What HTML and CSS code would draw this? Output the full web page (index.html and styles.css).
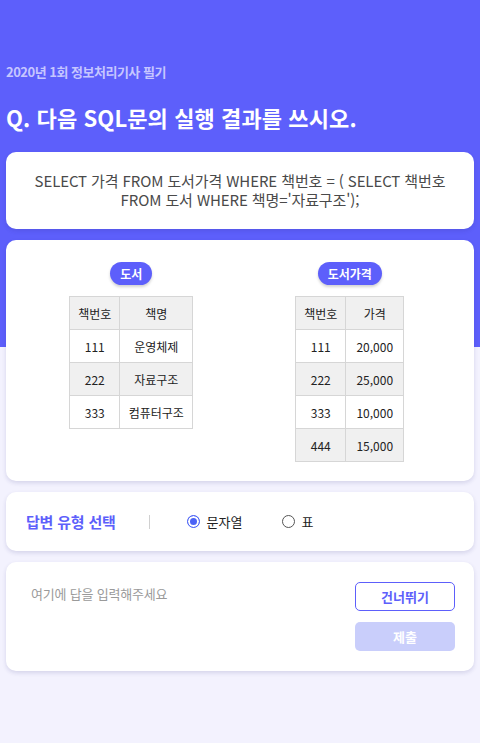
FILE: index.html
```html
<!DOCTYPE html>
<html lang="ko">
<head>
  <meta charset="UTF-8" />
  <meta name="viewport" content="width=device-width, initial-scale=1.0"/>
  <title>정보처리기사 필기</title>
  <link rel="stylesheet" href="styles.css">
</head>
<body>
  <header class="top">
    <p class="exam">2020년 1회 정보처리기사 필기</p>
    <h1>Q. 다음 SQL문의 실행 결과를 쓰시오.</h1>
  </header>

  <div class="card query">
    SELECT 가격 FROM 도서가격 WHERE 책번호 = ( SELECT 책번호 FROM 도서 WHERE 책명='자료구조');
  </div>

  <div class="card tables">
    <div class="tbl-box">
      <span class="pill">도서</span>
      <table class="t1">
        <tr><th>책번호</th><th>책명</th></tr>
        <tr><td>111</td><td>운영체제</td></tr>
        <tr><td>222</td><td>자료구조</td></tr>
        <tr><td>333</td><td>컴퓨터구조</td></tr>
      </table>
    </div>
    <div class="tbl-box">
      <span class="pill">도서가격</span>
      <table class="t2">
        <tr><th>책번호</th><th>가격</th></tr>
        <tr><td>111</td><td>20,000</td></tr>
        <tr><td>222</td><td>25,000</td></tr>
        <tr><td>333</td><td>10,000</td></tr>
        <tr><td>444</td><td>15,000</td></tr>
      </table>
    </div>
  </div>

  <div class="card type">
    <span class="type-title">답변 유형 선택</span>
    <span class="sep"></span>
    <label class="radio checked"><i></i>문자열</label>
    <label class="radio"><i></i>표</label>
  </div>

  <div class="card answer">
    <div class="placeholder">여기에 답을 입력해주세요</div>
    <div class="btns">
      <button class="btn skip">건너뛰기</button>
      <button class="btn submit">제출</button>
    </div>
  </div>
</body>
</html>
```

FILE: styles.css
```css
body { font-family: "Noto Sans CJK KR", "Noto Sans", sans-serif; margin: 0; padding: 0 0 72px; background: linear-gradient(#5d5ffb 347px, #f3f2fe 347px); color: #222; }
.top { padding: 63px 6px 0; color: #fff; }
.exam { margin: 0; font-size: 13px; font-weight: bold; color: #c6c6ff; line-height: 18px; letter-spacing: -0.5px; }
h1 { margin: 21px 0 0; font-size: 22px; line-height: 30px; font-weight: bold; letter-spacing: 0.1px; }
.card { background: #fff; border-radius: 10px; margin: 0 6px 11px; box-shadow: 0 2px 4px rgba(40,40,120,.15); }
.query { margin-top: 20px; padding: 19px 24px 20px; text-align: center; font-size: 15px; line-height: 19px; color: #4a4a4a; letter-spacing: -0.1px; }
.tables { display: grid; grid-template-columns: 1fr 1fr; padding: 22px 15px 19px 16px; align-items: start; }
.tbl-box { display: flex; flex-direction: column; align-items: center; }
.pill { background: #5d5ffb; color: #fff; font-size: 12px; font-weight: bold; line-height: 23px; padding: 0 10px; border-radius: 12px; box-shadow: 0 2px 3px rgba(0,0,0,.18); }
table { border-collapse: collapse; margin-top: 11px; font-size: 12px; color: #222; }
th, td { border: 1px solid #d6d6d6; height: 32px; padding: 0; text-align: center; font-weight: normal; }
th { background: #f0f0f0; }
tr:nth-child(3) td, tr:nth-child(5) td { background: #f0f0f0; }
.t1 th:first-child { width: 49px; }
.t1 th:last-child { width: 72px; }
.t2 th:first-child { width: 49px; }
.t2 th:last-child { width: 57px; }
.type { display: flex; align-items: center; height: 59px; padding: 0 20px; }
.type-title { color: #5d5ffb; font-size: 15px; font-weight: bold; letter-spacing: -0.2px; }
.sep { width: 1px; height: 14px; background: #d0d0d0; margin: 0 37px 0 33px; }
.radio { display: flex; align-items: center; font-size: 13px; color: #222; margin-right: 39px; }
.radio i { width: 11px; height: 11px; border: 1px solid #555; border-radius: 50%; margin-right: 7px; box-sizing: content-box; }
.radio.checked i { border-color: #4c63f5; background: #4c63f5; box-shadow: inset 0 0 0 2px #fff; }
.answer { display: flex; justify-content: space-between; padding: 20px 19px 20px 25px; }
.placeholder { font-size: 13px; color: #9a9a9a; line-height: 24px; letter-spacing: -0.2px; }
.btns { display: flex; flex-direction: column; gap: 11px; }
.btn { width: 100px; height: 29px; border-radius: 5px; font-family: inherit; font-size: 13px; font-weight: bold; cursor: pointer; }
.skip { background: #fff; border: 1px solid #5d5ffb; color: #5d5ffb; }
.submit { background: #c9cefb; border: none; color: #fff; }
```
